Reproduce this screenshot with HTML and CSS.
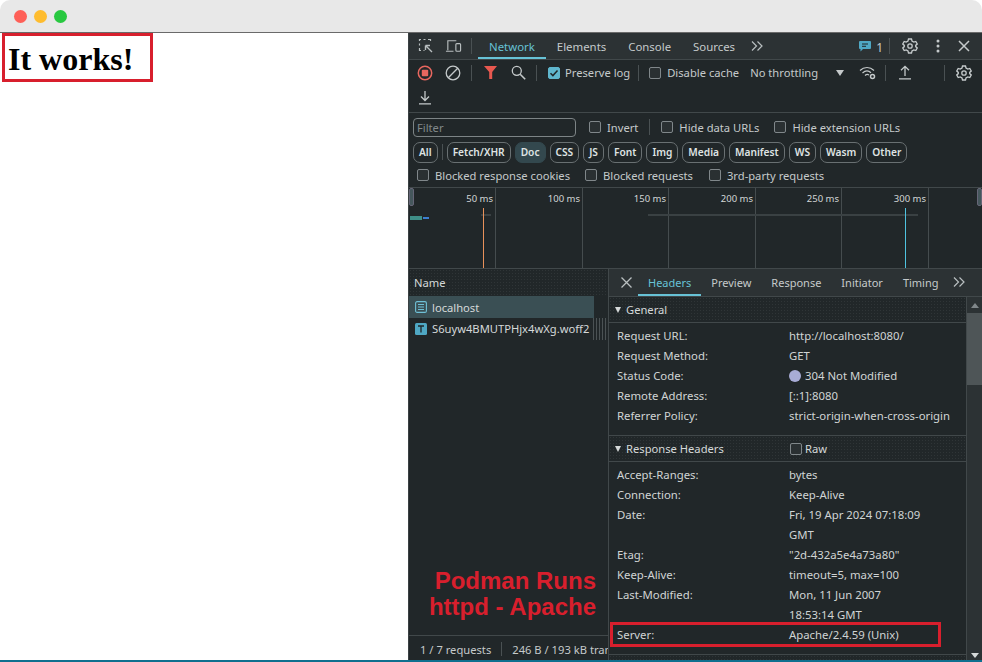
FILE: index.html
```html
<!DOCTYPE html>
<html lang="en">
<head>
<meta charset="utf-8">
<title>It works!</title>
<link rel="stylesheet" href="styles.css">
</head>
<body>
<div class="window">
  <header class="titlebar">
    <span class="dot red"></span><span class="dot yellow"></span><span class="dot green"></span>
  </header>
  <main class="content">
    <section class="page">
      <h1>It works!</h1>
    </section>
    <section class="devtools">
      <div class="tabbar">
        <svg class="ic ic-inspect" width="16" height="16" viewBox="0 0 16 16" fill="none" stroke="#b9bfc0" stroke-width="1.2"><path d="M1.5 3V1.5H3M5.5 1.5h2M10 1.5h2.5V3M1.5 5.5v2M1.5 10v2.5H3M5.500 12.500H6.500"/><path d="M7.500 7.500l6.500 6.500M7.500 7.500h4.500M7.500 7.500v4.500" stroke-width="1.400"/></svg>
        <svg class="ic ic-device" width="17" height="16" viewBox="0 0 18 16" fill="none" stroke="#b9bfc0" stroke-width="1.200"><path d="M3 12.500V2.500h9M1 13.500h8"/><rect x="11.500" y="5.500" width="5" height="8" rx="1"/></svg>
        <span class="vline tab-sep"></span>
        <span class="tab active">Network</span>
        <span class="tab">Elements</span>
        <span class="tab">Console</span>
        <span class="tab">Sources</span>
        <svg class="ic chev" width="12" height="10" viewBox="0 0 12 10" fill="none" stroke="#b9bfc0" stroke-width="1.200"><path d="M1 .5L5.500 5 1 9.500M6.500 .5L11 5 6.500 9.500"/></svg>
        <span class="grow"></span>
        <svg class="ic" width="12" height="11" viewBox="0 0 12 11"><path d="M1 0h10a1 1 0 0 1 1 1v6a1 1 0 0 1-1 1H4L1.500 10.500V8H1a1 1 0 0 1-1-1V1a1 1 0 0 1 1-1z" fill="#4fa8c4"/><path d="M3 3h6M3 5.300h4" stroke="#1f2628" stroke-width="1"/></svg>
        <span class="badge-num">1</span>
        <span class="vline msg-sep"></span>
        <svg class="ic gear gear-top" width="16" height="16" viewBox="0 0 16 16" fill="none" stroke="#c4c9ca" stroke-width="1.300"><path d="M6.500 1h3l.5 2 1.800 1 2-.6 1.400 2.600-1.500 1.400v1.200l1.500 1.400-1.400 2.600-2-.6-1.800 1-.5 2h-3l-.5-2-1.800-1-2 .6L.8 10l1.500-1.400V7.400L.8 6l1.400-2.600 2 .6L6 3z"/><circle cx="8" cy="8" r="2.200"/></svg>
        <svg class="ic kebab" width="4" height="14" viewBox="0 0 4 14" fill="#c4c9ca"><circle cx="2" cy="2" r="1.500"/><circle cx="2" cy="7" r="1.500"/><circle cx="2" cy="12" r="1.500"/></svg>
        <svg class="ic close-top" width="12" height="12" viewBox="0 0 12 12" stroke="#c4c9ca" stroke-width="1.500"><path d="M1 1l10 10M11 1L1 11"/></svg>
      </div>

      <div class="toolbar">
        <div class="tool-row">
          <svg class="ic rec" width="16" height="16" viewBox="0 0 16 16"><circle cx="8" cy="8" r="6.700" fill="none" stroke="#e8675f" stroke-width="1.500"/><rect x="4.800" y="4.800" width="6.400" height="6.400" rx="1" fill="#e8675f"/></svg>
          <svg class="ic clear" width="16" height="16" viewBox="0 0 16 16" fill="none" stroke="#c4c9ca" stroke-width="1.300"><circle cx="8" cy="8" r="6.800"/><path d="M3.300 12.700l9.400-9.400"/></svg>
          <span class="vline sep-a"></span>
          <svg class="ic funnel" width="14" height="13" viewBox="0 0 14 13"><path d="M0 0h13L8.200 6v7H5.200V6z" fill="#e8584f"/></svg>
          <svg class="ic search" width="15" height="15" viewBox="0 0 15 15" fill="none" stroke="#c4c9ca" stroke-width="1.300"><circle cx="5.800" cy="5.800" r="4.500"/><path d="M9.200 9.200l5 5" stroke-width="1.600"/></svg>
          <span class="vline sep-b"></span>
          <span class="cb checked"><svg width="12" height="12" viewBox="0 0 12 12" fill="none" stroke="#1f2628" stroke-width="1.500"><path d="M2.500 6.200l2.400 2.400 4.600-5"/></svg></span>
          <span class="label preserve">Preserve log</span>
          <span class="vline sep-c"></span>
          <span class="cb"></span>
          <span class="label disable">Disable cache</span>
          <span class="label throttle">No throttling</span>
          <span class="caret"></span>
          <svg class="ic wifi" width="18" height="14" viewBox="0 0 18 14" fill="none" stroke="#c4c9ca" stroke-width="1.200"><path d="M1 4.500C5 .500 11 .500 15 4.500M3.500 7c2.800-2.600 6-2.600 8.500-.3M6 9.500c1.500-1.200 3-1.200 4-.4"/><circle cx="13.500" cy="10.500" r="2" stroke-width="1.500"/></svg>
          <span class="vline sep-d"></span>
          <svg class="ic upload" width="14" height="15" viewBox="0 0 14 15" fill="none" stroke="#c4c9ca" stroke-width="1.300"><path d="M7 11V1.500M3 5.300l4-4 4 4M1 13.800h12"/></svg>
          <span class="vline sep-e"></span>
          <svg class="ic gear gear-net" width="16" height="16" viewBox="0 0 16 16" fill="none" stroke="#c4c9ca" stroke-width="1.300"><path d="M6.500 1h3l.5 2 1.800 1 2-.6 1.400 2.600-1.500 1.400v1.200l1.500 1.400-1.400 2.600-2-.6-1.800 1-.5 2h-3l-.5-2-1.800-1-2 .6L.8 10l1.500-1.400V7.400L.8 6l1.400-2.600 2 .6L6 3z"/><circle cx="8" cy="8" r="2.200"/></svg>
        </div>
        <div class="tool-row second">
          <svg class="ic download" width="14" height="15" viewBox="0 0 14 15" fill="none" stroke="#c4c9ca" stroke-width="1.300"><path d="M7 1v9.500M3 6.500l4 4 4-4M1 13.800h12"/></svg>
        </div>
      </div>

      <div class="filters">
        <div class="filter-row">
          <div class="filter-input">Filter</div>
          <span class="cb f1"></span><span class="label">Invert</span>
          <span class="vline f-sep"></span>
          <span class="cb f2"></span><span class="label">Hide data URLs</span>
          <span class="cb f3"></span><span class="label">Hide extension URLs</span>
        </div>
        <div class="chips">
          <span class="chip">All</span>
          <span class="vline chip-sep"></span>
          <span class="chip">Fetch/XHR</span>
          <span class="chip on">Doc</span>
          <span class="chip">CSS</span>
          <span class="chip">JS</span>
          <span class="chip">Font</span>
          <span class="chip">Img</span>
          <span class="chip">Media</span>
          <span class="chip">Manifest</span>
          <span class="chip">WS</span>
          <span class="chip">Wasm</span>
          <span class="chip">Other</span>
        </div>
        <div class="blocked-row">
          <span class="cb"></span><span class="label">Blocked response cookies</span>
          <span class="cb b2"></span><span class="label">Blocked requests</span>
          <span class="cb b3"></span><span class="label">3rd-party requests</span>
        </div>
      </div>

      <div class="overview">
        <span class="grid-line" style="left:86px"></span>
        <span class="grid-line" style="left:173px"></span>
        <span class="grid-line" style="left:259px"></span>
        <span class="grid-line" style="left:346px"></span>
        <span class="grid-line" style="left:432px"></span>
        <span class="grid-line" style="left:519px"></span>
        <span class="ms" style="right:489px">50 ms</span>
        <span class="ms" style="right:402px">100 ms</span>
        <span class="ms" style="right:316px">150 ms</span>
        <span class="ms" style="right:229px">200 ms</span>
        <span class="ms" style="right:143px">250 ms</span>
        <span class="ms" style="right:56px">300 ms</span>
        <span class="track t1"></span>
        <span class="track t2"></span>
        <span class="marker orange"></span>
        <span class="marker blue"></span>
        <span class="req req-a"></span>
        <span class="req req-b"></span>
        <span class="handle h-left"></span>
        <span class="handle h-right"></span>
      </div>

      <div class="split">
        <div class="names">
          <div class="names-head"><span>Name</span></div>
          <div class="name-row selected">
            <svg width="12" height="12" viewBox="0 0 12 12" fill="none" stroke="#6fc0d6" stroke-width="1.100"><rect x=".6" y=".6" width="10.800" height="10.800" rx="1.500"/><path d="M3 3.500h6M3 6h6M3 8.500h6"/></svg>
            <span>localhost</span>
          </div>
          <div class="name-row">
            <svg width="12" height="12" viewBox="0 0 12 12"><rect width="12" height="12" rx="1.500" fill="#4fa8c4"/><path d="M3 3h6M6 3v6.500" stroke="#1f2628" stroke-width="1.300" fill="none"/></svg>
            <span>S6uyw4BMUTPHjx4wXg.woff2</span>
          </div>
          <span class="resizer"></span>
          <div class="status">
            <span>1 / 7 requests</span>
            <span class="vline st-sep"></span>
            <span class="clip">246 B / 193 kB transferred</span>
          </div>
        </div>

        <div class="detail">
          <div class="detail-tabs">
            <svg class="d-close" width="11" height="11" viewBox="0 0 11 11" stroke="#b9bfc0" stroke-width="1.300"><path d="M.5.5l10 10M10.500.5l-10 10"/></svg>
            <span class="tab active">Headers</span>
            <span class="tab">Preview</span>
            <span class="tab">Response</span>
            <span class="tab">Initiator</span>
            <span class="tab">Timing</span>
            <svg class="ic d-chev" width="12" height="10" viewBox="0 0 12 10" fill="none" stroke="#b9bfc0" stroke-width="1.200"><path d="M1 .5L5.500 5 1 9.500M6.500 .5L11 5 6.500 9.500"/></svg>
          </div>
          <div class="detail-body">
            <div class="scroll-pane">
              <div class="sec-head"><span class="tri"></span>General</div>
              <div class="rows general">
                <div class="kv"><span>Request URL:</span><span>http://localhost:8080/</span></div>
                <div class="kv"><span>Request Method:</span><span>GET</span></div>
                <div class="kv"><span>Status Code:</span><span><i class="status-dot"></i>304 Not Modified</span></div>
                <div class="kv"><span>Remote Address:</span><span>[::1]:8080</span></div>
                <div class="kv"><span>Referrer Policy:</span><span>strict-origin-when-cross-origin</span></div>
              </div>
              <div class="sec-head resp">
                <span class="sec-title"><span class="tri"></span>Response Headers</span>
                <span class="cb raw-cb"></span><span class="raw">Raw</span>
              </div>
              <div class="rows">
                <div class="kv"><span>Accept-Ranges:</span><span>bytes</span></div>
                <div class="kv"><span>Connection:</span><span>Keep-Alive</span></div>
                <div class="kv"><span>Date:</span><span>Fri, 19 Apr 2024 07:18:09<br>GMT</span></div>
                <div class="kv"><span>Etag:</span><span>"2d-432a5e4a73a80"</span></div>
                <div class="kv"><span>Keep-Alive:</span><span>timeout=5, max=100</span></div>
                <div class="kv"><span>Last-Modified:</span><span>Mon, 11 Jun 2007<br>18:53:14 GMT</span></div>
                <div class="kv"><span>Server:</span><span>Apache/2.4.59 (Unix)</span></div>
              </div>
              <div class="sec-head last"></div>
            </div>
            <div class="scrollbar">
              <span class="sb-up"></span>
              <span class="sb-thumb"></span>
              <span class="grow"></span>
              <span class="sb-down"></span>
            </div>
          </div>
        </div>
      </div>
    </section>
  </main>
  <div class="bottom-line"></div>
  <div class="note">Podman Runs<br>httpd - Apache</div>
  <span class="mark mark-h1"></span>
  <span class="mark mark-server"></span>
</div>
</body>
</html>
```

FILE: styles.css
```css
* { box-sizing: border-box; }
html, body { margin: 0; padding: 0; background: #fff; }
body { width: 982px; height: 662px; overflow: hidden; font-family: "Noto Sans", sans-serif; }

.window { position: relative; width: 982px; height: 662px; display: flex; flex-direction: column; overflow: hidden; border-radius: 10px 10px 0 0; }
.titlebar { flex: 0 0 33px; background: #e8e8e8; border-bottom: 1px solid #6a6a6a; display: flex; align-items: center; gap: 7px; padding: 1px 0 0 14px; }
.dot { width: 13px; height: 13px; border-radius: 50%; }
.red { background: #fe5f57; }
.yellow { background: #febc2e; }
.green { background: #28c840; }

.content { flex: 1; display: flex; min-height: 0; }
.page { flex: 0 0 408px; background: #fff; }
h1 { margin: 8px 0 0 8px; font: bold 32px/37px "Liberation Serif", serif; color: #000; }

.devtools { flex: 0 0 574px; width: 574px; min-width: 0; background: #212729; color: #c5cacb; font-size: 11.200px; display: flex; flex-direction: column; min-height: 0; border-left: 1px solid #3b4143; }

.ic { flex: none; display: block; }
.grow { flex: 1; }
.vline { flex: none; width: 1px; height: 16px; background: #4a5153; }
.label { white-space: nowrap; }

.tabbar { flex: 0 0 27px; background: #2c3234; border-bottom: 1px solid #41484a; display: flex; align-items: center; padding-left: 9px; }
.ic-device { margin-left: 11px; }
.tab-sep { margin: 0 6px 0 9px; }
.tab { height: 100%; display: flex; align-items: center; padding: 0 10px; white-space: nowrap; color: #c5cacb; font-size: 11px; }
.tabbar .tab { padding: 0 11px; font-size: 11.400px; }
.tab.active { color: #67c2d6; box-shadow: inset 0 -2px 0 #67c2d6; }
.chev { margin: -1px 0 0 5px; }
.badge-num { margin: 0 0 0 5px; color: #c5cacb; font-size: 12px; padding-top: 2px; }
.msg-sep { margin-left: 6px; }
.gear-top { margin-left: 12px; }
.kebab { margin-left: 18px; }
.close-top { margin: 0 12px 0 18px; }

.toolbar { flex: 0 0 53px; border-bottom: 1px solid #41484a; }
.tool-row { height: 25px; display: flex; align-items: center; padding-left: 8px; }
.tool-row.second { height: 27px; padding: 0 0 2px 9px; }
.clear { margin-left: 12px; }
.sep-a { margin-left: 10px; }
.funnel { margin-left: 12px; }
.search { margin-left: 13px; }
.sep-b { margin-left: 10px; }
.cb { flex: none; width: 12px; height: 12px; border: 1px solid #80878a; border-radius: 2px; display: block; background: #2a3032; }
.cb.checked { margin-left: 11px; background: #5fb6cd; border-color: #5fb6cd; }
.cb.checked svg { display: block; margin: -1px; }
.preserve { margin-left: 5px; }
.sep-c { margin-left: 8px; margin-right: 10px; }
.disable { margin-left: 6px; }
.throttle { margin-left: 11px; }
.caret { width: 0; height: 0; border: 4px solid transparent; border-top: 6px solid #c5cacb; border-bottom: 0; margin-left: 18px; }
.wifi { margin-left: 15px; }
.sep-d { margin-left: 8px; }
.upload { margin-left: 12px; }
.sep-e { margin-left: 32px; }
.gear-net { margin-left: 11px; }

.filters { flex: 0 0 75px; border-bottom: 1px solid #41484a; padding: 4px 0 0 4px; }
.filter-row { height: 20px; display: flex; align-items: center; }
.filter-input { width: 163px; height: 19px; border: 1px solid #7d8486; border-radius: 4px; padding: 0 3px; line-height: 18px; color: #82898b; }
.filter-row .label { margin-left: 6px; }
.f1 { margin-left: 13px; }
.f-sep { margin: 0 11px 0 11px; }
.f3 { margin-left: 15px; }
.chips { display: flex; align-items: center; gap: 4px; height: 22px; margin-top: 4px; }
.chip { height: 21px; padding: 0 5px; border: 1px solid #697072; border-radius: 7px; font-size: 10.200px; font-weight: 600; line-height: 19px; color: #dfe3e3; white-space: nowrap; }
.chip.on { background: #33484e; border-color: #33484e; }
.chip-sep { margin: 0; height: 16px; }
.blocked-row { display: flex; align-items: center; height: 22px; margin: 1px 0 0 4px; }
.blocked-row .label { margin-left: 6px; }
.b2 { margin-left: 15px; }
.b3 { margin-left: 16px; }

.overview { position: relative; flex: 0 0 81px; border-bottom: 1px solid #41484a; overflow: hidden; }
.grid-line { position: absolute; top: 0; bottom: 0; width: 1px; background: #454c4e; }
.ms { position: absolute; top: 4px; font-size: 9.500px; line-height: 13px; color: #d2d6d6; background: #212729; padding: 0 0 0 2px; }
.marker { position: absolute; top: 20px; bottom: 0; width: 1px; }
.orange { left: 74px; background: #e8915a; }
.blue { left: 496px; background: #4fc3e0; }
.track { position: absolute; top: 26px; height: 2px; background: #3a4143; }
.t1 { left: 72px; width: 10px; }
.t2 { left: 239px; width: 270px; }
.req { position: absolute; }
.req-a { left: 1px; top: 28px; width: 12px; height: 4px; background: #3f8f88; }
.req-b { left: 14px; top: 29px; width: 6px; height: 2px; background: #3c7fd0; }
.handle { position: absolute; top: 0; width: 5px; height: 18px; background: #45575c; border: 1px solid #667; border-radius: 2px; }
.h-left { left: 0; }
.h-right { right: 0; }

.split { flex: 1; display: flex; min-height: 0; }
.names { position: relative; flex: 0 0 200px; width: 200px; min-width: 0; display: flex; flex-direction: column; border-right: 1px solid #41484a; }
.names-head { flex: 0 0 27px; display: flex; align-items: center; padding-left: 5px; background: #212729 radial-gradient(#2f3537 .6px, transparent .7px) 0 0 / 3px 3px; }
.names-head span { color: #d5d9d9; }
.name-row { flex: none; width: 185px; height: 21.500px; display: flex; align-items: center; gap: 5px; padding: 1px 0 0 6px; white-space: nowrap; color: #d5d9d9; }
.name-row.selected { background: #3a4f54; }
.resizer { position: absolute; top: 49px; right: 0; width: 15px; height: 22px; background: repeating-linear-gradient(90deg, #4b5254 0 1px, transparent 1px 3px); }
.status { flex: none; margin-top: auto; height: 27px; border-top: 1px solid #41484a; display: flex; align-items: center; padding-left: 11px; overflow: hidden; white-space: nowrap; }
.st-sep { margin: 0 10px; height: 14px; }
.clip { overflow: hidden; }

.detail { flex: 1; min-width: 0; display: flex; flex-direction: column; }
.detail-tabs { flex: 0 0 28px; background: #2c3234; border-bottom: 1px solid #41484a; display: flex; align-items: center; padding-left: 12px; }
.d-close { flex: none; margin-right: 6px; }
.d-chev { margin: -1px 0 0 4px; }
.detail-body { flex: 1; display: flex; min-height: 0; }
.scroll-pane { flex: 1; min-width: 0; overflow: hidden; border-right: 1px solid #41484a; }
.sec-head { height: 26px; display: flex; align-items: center; padding-left: 6px; color: #d5d9d9; border-bottom: 1px solid #41484a; background: #212729 radial-gradient(#2f3537 .6px, transparent .7px) 0 0 / 3px 3px; }
.sec-head.resp { height: 27px; border-top: 1px solid #41484a; }
.sec-head.last { border-top: 1px solid #41484a; }
.sec-title { width: 175px; flex: none; display: flex; align-items: center; }
.tri { width: 0; height: 0; border: 3.500px solid transparent; border-top: 6px solid #d5d9d9; border-bottom: 0; margin-right: 5px; }
.raw-cb { margin-right: 3px; }
.rows { padding: 3px 0 9px 8px; }
.kv { display: grid; grid-template-columns: 172px auto; font-size: 11.350px; line-height: 20px; white-space: nowrap; color: #d0d4d4; }
.status-dot { display: inline-block; width: 12px; height: 12px; border-radius: 50%; background: #a8acd6; margin-right: 4px; vertical-align: -2px; }

.scrollbar { flex: 0 0 15px; background: #2c3234; display: flex; flex-direction: column; align-items: center; }
.sb-up { flex: none; margin-top: 6px; width: 0; height: 0; border: 4px solid transparent; border-bottom: 5px solid #80878a; border-top: 0; }
.sb-thumb { flex: none; width: 100%; height: 72px; margin-top: 5px; background: #4e5557; }
.sb-down { flex: none; margin-bottom: 4px; width: 0; height: 0; border: 4px solid transparent; border-top: 5px solid #d5d9d9; border-bottom: 0; }

.bottom-line { position: absolute; left: 0; right: 0; bottom: 0; height: 2px; background: #0f6f8f; }
.note { position: absolute; left: 410px; top: 568px; width: 186px; text-align: right; font: bold 24px/26px "Liberation Sans", sans-serif; color: #d81f2d; white-space: nowrap; }
.mark { position: absolute; border: 3px solid #d81f2d; }
.mark-h1 { left: 2px; top: 33px; width: 151px; height: 49px; }
.mark-server { left: 610px; top: 622px; width: 331px; height: 25px; }
```
